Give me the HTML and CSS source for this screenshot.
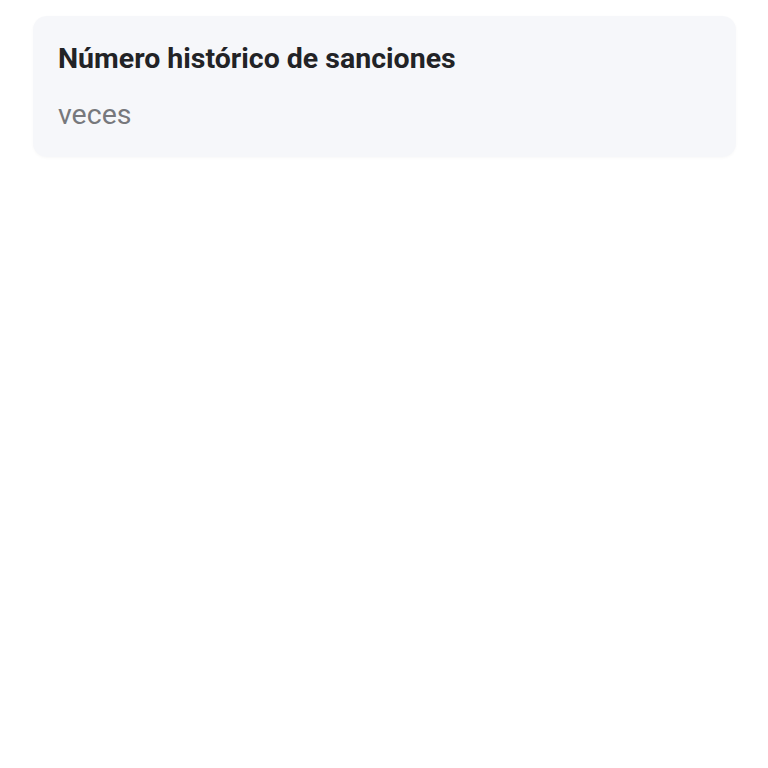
FILE: index.html
```html
<!DOCTYPE html>
<html lang="es">
<head>
    <meta charset="UTF-8">
    <meta name="viewport" content="width=device-width, initial-scale=1.0">
    <title>Sanciones</title>
    <link rel="stylesheet" href="styles.css">
</head>
<body>
    <div class="page">
        <div class="card">
            <h2 class="card-title">Número histórico de sanciones</h2>
            <p class="card-value">veces</p>
        </div>
    </div>
</body>
</html>
```

FILE: styles.css
```css
body {
    margin: 0;
    background-color: #fff;
    font-family: Roboto, "Liberation Sans", sans-serif;
}
.page {
    padding: 16px 32px 16px 33px;
}
.card {
    background-color: #f6f7fa;
    border-radius: 14px;
    padding: 24px 25px 24px 25px;
    box-shadow: 0 1px 3px rgba(0, 0, 0, 0.03);
}
.card-title {
    margin: 0;
    font-size: 28.5px;
    line-height: 37px;
    font-weight: 700;
    color: #222326;
}
.card-value {
    margin: 20px 0 0 0;
    font-size: 28.5px;
    line-height: 36px;
    color: #77787c;
}
```
